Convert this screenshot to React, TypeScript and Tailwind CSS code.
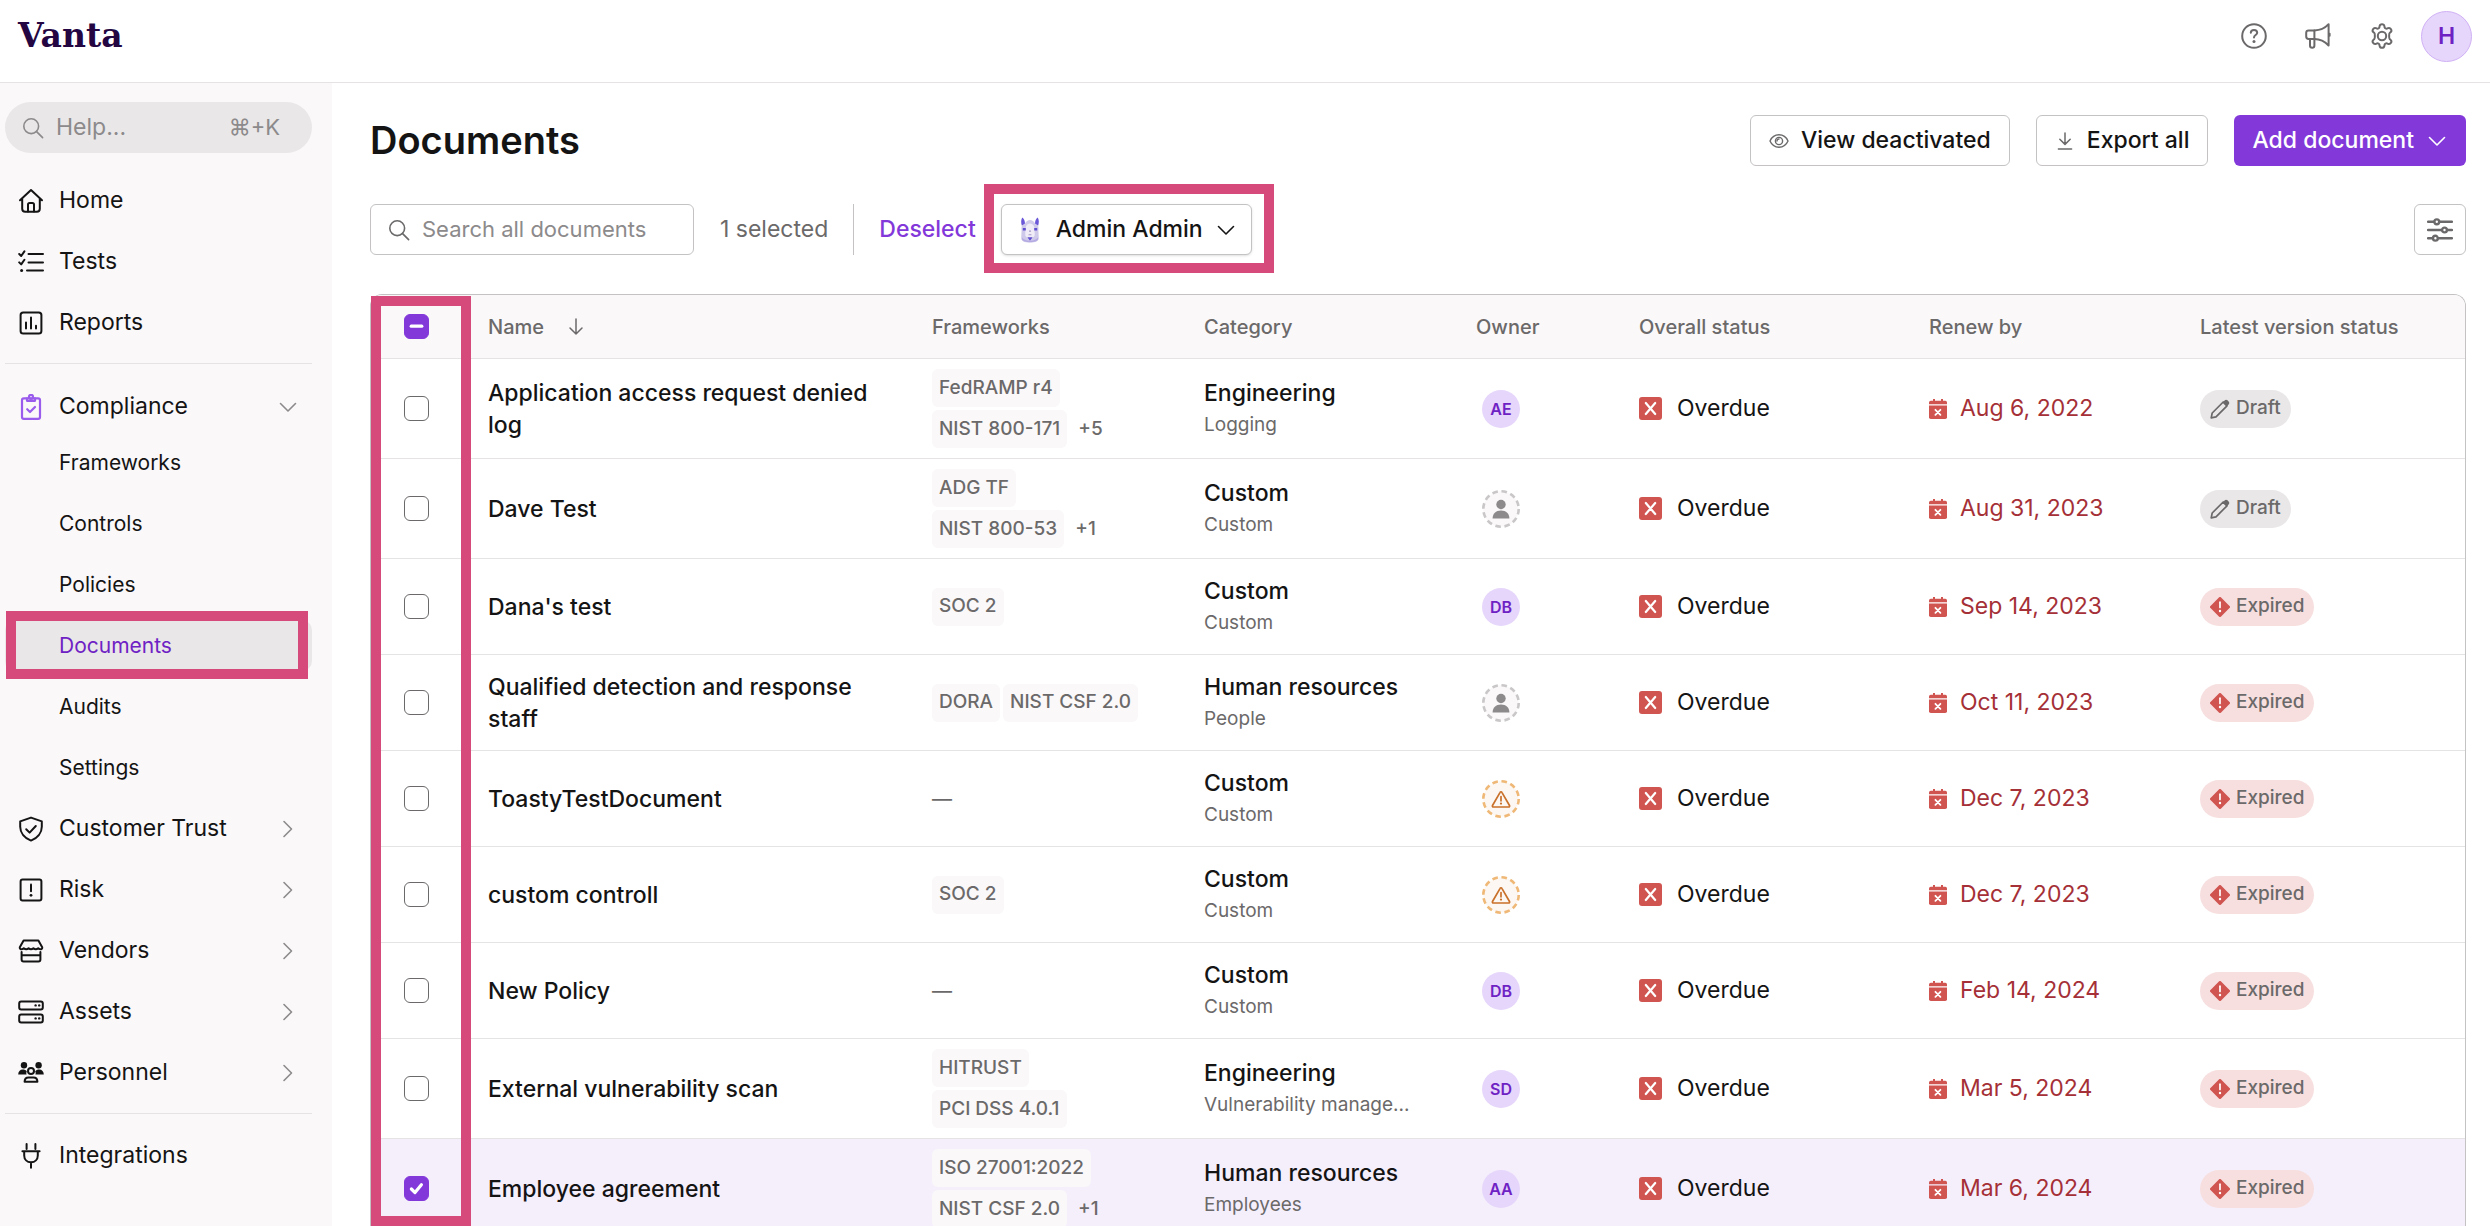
import React from "react";

type SvgProps = { className?: string; children?: React.ReactNode; box?: string; width?: number };

function Svg({ className = "size-[26px]", children, box = "0 0 26 26", width = 2 }: SvgProps) {
  return (
    <svg
      viewBox={box}
      className={`shrink-0 ${className}`}
      fill="none"
      stroke="currentColor"
      strokeWidth={width}
      strokeLinecap="round"
      strokeLinejoin="round"
      aria-hidden="true"
    >
      {children}
    </svg>
  );
}

const HomeIcon = () => (
  <Svg>
    <path d="M2 12.2 13 2l11 10.2M4.2 10.4v10.4a3 3 0 0 0 3 3h11.6a3 3 0 0 0 3-3V10.4" />
    <path d="M10 23.5v-7a1.6 1.6 0 0 1 1.6-1.6h2.8a1.6 1.6 0 0 1 1.6 1.6v7" />
  </Svg>
);

const TestsIcon = () => (
  <Svg>
    <path d="m1.2 5 2 2 3.2-4.6M1.2 13.4l2 2 3.2-4.6M10.5 5H25M10.5 13.4H25M9 21.6h16" />
    <circle cx="3.6" cy="21.6" r="1.5" fill="currentColor" stroke="none" />
  </Svg>
);

const ReportsIcon = () => (
  <Svg>
    <rect x="2.6" y="2.4" width="20.8" height="21.2" rx="2.6" />
    <path d="M8 12.5v6M13 7.5v11M18 15.8v2.7" />
  </Svg>
);

const ComplianceIcon = () => (
  <Svg width={2.2}>
    <rect x="4" y="4.4" width="18" height="20.4" rx="1.8" />
    <path d="M9 4.4v2.4h8V4.4" />
    <circle cx="13" cy="2.8" r="2" />
    <path d="m9.2 15.2 2.8 2.8 5-5" />
  </Svg>
);

const ShieldIcon = () => (
  <Svg>
    <path d="M13 1.6 2.2 5.4v5.4c0 6.2 4.4 11.4 10.8 13.8 6.4-2.4 10.8-7.6 10.8-13.8V5.4Z" />
    <path d="m8.2 13.2 3.4 3.4 6.2-6.6" />
  </Svg>
);

const RiskIcon = () => (
  <Svg>
    <rect x="2.6" y="2.4" width="20.8" height="21.2" rx="2" />
    <path d="M13 7.5v6.7" />
    <circle cx="13" cy="18.3" r="1.4" fill="currentColor" stroke="none" />
  </Svg>
);

const VendorsIcon = () => (
  <Svg>
    <path d="M5.6 2.4h14.8l3.8 6.8c.6 2-2.4 3-4 1-1.6 1.4-3.2 1.4-4.8 0-1.6 1.4-3.2 1.4-4.8 0-1.6 1.4-3.2 1.4-4.8 0-1.6 2-4.6 1-4-1ZM3.6 14v7.6a2 2 0 0 0 2 2h14.8a2 2 0 0 0 2-2V14M3.6 17.2h18.8" />
  </Svg>
);

const AssetsIcon = () => (
  <Svg>
    <rect x="1.2" y="2.4" width="23.6" height="8" rx="2" />
    <rect x="1.2" y="15.4" width="23.6" height="8" rx="2" />
    <g fill="currentColor" stroke="none">
      <circle cx="17.6" cy="6.4" r="1.2" />
      <circle cx="21.2" cy="6.4" r="1.2" />
      <circle cx="17.6" cy="19.4" r="1.2" />
      <circle cx="21.2" cy="19.4" r="1.2" />
    </g>
  </Svg>
);

const PersonnelIcon = () => (
  <Svg>
    <g fill="currentColor" stroke="none">
      <circle cx="6" cy="5.2" r="3.2" />
      <circle cx="20.6" cy="5.2" r="3.2" />
      <path d="M.2 14.6c0-3 1.8-5 4.6-5 1.6 0 3.2.6 4 1.8-.6 1-.6 2.2-.2 3.2ZM25.8 14.6c0-3-1.8-5-4.6-5-1.6 0-3.2.6-4 1.8.6 1 .6 2.2.2 3.2Z" />
    </g>
    <circle cx="13" cy="11" r="3" />
    <path d="M6.6 21.8c0-3 1.8-4.4 4-4.4h4.8c2.2 0 4 1.4 4 4.4Z" />
  </Svg>
);

const PlugIcon = () => (
  <Svg>
    <path d="M8.6 1v5M17.4 1v5M4.4 8.2h17.2M6.2 8.2v4.2c0 4 2.8 6.8 6.8 6.8s6.8-2.8 6.8-6.8V8.2M13 19.4v5.4" />
  </Svg>
);

const SearchIcon = ({ className = "size-[22px]" }: { className?: string }) => (
  <Svg className={className} box="0 0 22 22" width={1.6}>
    <circle cx="9.2" cy="9.2" r="7.4" />
    <path d="m14.6 14.6 6 6" />
  </Svg>
);

const ChevronDown = ({ className = "size-[22px]" }: { className?: string }) => (
  <Svg className={className} box="0 0 22 22" width={1.6}>
    <path d="m3.5 7.5 7.5 7.5 7.5-7.5" />
  </Svg>
);

const ChevronRight = ({ className = "size-[22px]" }: { className?: string }) => (
  <Svg className={className} box="0 0 22 22" width={1.6}>
    <path d="m7 3.5 7.5 7.5L7 18.5" />
  </Svg>
);

const HelpIcon = () => (
  <Svg>
    <circle cx="13" cy="13" r="11.8" />
    <path d="M9.8 9.8c0-1.8 1.4-2.8 3.2-2.8s3.2 1.2 3.2 2.8c0 2.2-3.2 2.2-3.2 4.6" />
    <circle cx="13" cy="18.4" r="1.5" fill="currentColor" stroke="none" />
  </Svg>
);

const MegaphoneIcon = () => (
  <Svg>
    <path d="M9.4 7.4H3.6a2.4 2.4 0 0 0-2.4 2.4v3.8A2.4 2.4 0 0 0 3.6 16h5.8Z" />
    <path d="M9.4 7.4c5.6 0 10.4-2 14.2-6.2v21.4c-3.8-4.2-8.6-6.6-14.2-6.6" />
    <path d="M5 16v6.6a2.2 2.2 0 0 0 4.4 0V16" />
    <path d="M24.6 10.8v2" />
  </Svg>
);

const GearIcon = () => (
  <Svg>
    <path d="M10.6 3.2c.2-1.2 1-2 2.4-2s2.2.8 2.4 2l.2 1.2c.1.7 1.6 1.5 2.3 1.2l1.1-.5c1.2-.4 2.3-.1 3 1.1.7 1.2.5 2.3-.5 3.1l-.9.8c-.6.5-.6 5.3 0 5.8l.9.8c1 .8 1.2 1.9.5 3.1-.7 1.2-1.8 1.5-3 1.1l-1.1-.5c-.7-.3-2.2.5-2.3 1.2l-.2 1.2c-.2 1.2-1 2-2.4 2s-2.2-.8-2.4-2l-.2-1.2c-.1-.7-1.6-1.5-2.3-1.2l-1.1.5c-1.2.4-2.3.1-3-1.1-.7-1.2-.5-2.3.5-3.1l.9-.8c.6-.5.6-5.3 0-5.8l-.9-.8c-1-.8-1.2-1.9-.5-3.1.7-1.2 1.8-1.5 3-1.1l1.1.5c.7.3 2.2-.5 2.3-1.2Z" />
    <circle cx="13" cy="13" r="4.2" />
  </Svg>
);

const EyeIcon = () => (
  <Svg className="size-5" box="0 0 20 20" width={1.4}>
    <path d="M1 10c1.8-4 5-6.200 9-6.200S17.200 6 19 10c-1.800 4-5 6.200-9 6.200S2.800 14 1 10Z" />
    <circle cx="10" cy="10" r="3.6" />
    <path d="M8 10a2 2 0 0 1 2-2" />
  </Svg>
);

const DownloadIcon = () => (
  <Svg className="size-5" box="0 0 20 20" width={1.5}>
    <path d="M10 2v11M4.8 8.2 10 13.4l5.2-5.2M3.4 18h13.2" />
  </Svg>
);

const SlidersIcon = () => (
  <Svg width={2.4}>
    <path d="M1 4.8h6M12.6 4.8H25M1 13h13.6M20.4 13H25M1 21.2h4.6M11.2 21.2H25" />
    <circle cx="9.8" cy="4.8" r="2.4" />
    <circle cx="17.5" cy="13" r="2.4" />
    <circle cx="8.4" cy="21.2" r="2.4" />
  </Svg>
);

const SortArrow = () => (
  <Svg className="size-5" box="0 0 20 20" width={1.5}>
    <path d="M10 2v15M4 11l6 6 6-6" />
  </Svg>
);

const OverdueIcon = () => (
  <svg viewBox="0 0 23 23" className="size-[23px] shrink-0" aria-hidden="true">
    <rect width="23" height="23" rx="3" fill="#d05551" />
    <path d="m6.8 6 9.4 11M16.2 6 6.8 17" stroke="#fff" strokeWidth="2.2" strokeLinecap="round" />
  </svg>
);

const CalendarIcon = () => (
  <svg viewBox="0 0 18 20" className="h-5 w-[18px] shrink-0" aria-hidden="true">
    <path d="M4 0h2v1.8h6V0h2v1.8h2A1.8 1.8 0 0 1 18 3.6v1.6H0V3.6a1.8 1.8 0 0 1 1.8-1.800H4Z" fill="#d05551" />
    <path d="M0 6.6h18v11.6A1.8 1.8 0 0 1 16.2 20H1.8A1.8 1.8 0 0 1 0 18.2Z" fill="#d05551" />
    <path d="m6.4 10.8 5 5M11.4 10.8l-5 5" stroke="#fff" strokeWidth="1.8" strokeLinecap="round" />
  </svg>
);

const PencilIcon = () => (
  <svg viewBox="0 0 20 20" className="size-5 shrink-0" aria-hidden="true">
    <path d="m1.2 18.8 1-4.8L13.2 3l3.8 3.8L6 17.8Z" fill="none" stroke="#6b6969" strokeWidth="1.7" strokeLinejoin="round" />
    <path d="m12.6 3.4 2-2c1-1 2.2-.8 3.2.2l.6.6c1 1 1.2 2.2.2 3.2l-2 2Z" fill="#6b6969" />
  </svg>
);

const ExpiredIcon = () => (
  <svg viewBox="0 0 20 20" className="size-5 shrink-0" aria-hidden="true">
    <path d="M8.9.5a1.5 1.5 0 0 1 2.2 0l8.4 8.4a1.5 1.5 0 0 1 0 2.2l-8.4 8.4a1.5 1.5 0 0 1-2.2 0L.5 11.1a1.5 1.5 0 0 1 0-2.2Z" fill="#d05551" />
    <path d="M10 5.2v5.2" stroke="#fff" strokeWidth="1.7" strokeLinecap="round" />
    <circle cx="10" cy="14" r="1.2" fill="#fff" />
  </svg>
);

const LlamaIcon = () => (
  <svg viewBox="0 0 20 26" className="mr-1 h-[26px] w-5 shrink-0" aria-hidden="true">
    <path d="M2.2.6C4 1.8 5 4 5 7L2 9C.8 6 .9 3 2.2.6ZM17.8.6C16 1.8 15 4 15 7l3 2c1.2-3 1.1-6-.2-8.4Z" fill="#6a58d8" />
    <path d="M5 6.6C6 4.2 8 3 10 3s4 1.2 5 3.6l3 1.8c.6 1.6.6 3 .4 4.6l.4 8c0 3-3 4.6-8.8 4.6S1.2 24 1.2 21l.4-8c-.2-1.6-.2-3 .4-4.6Z" fill="#cfc9ea" />
    <path d="M6 9.4C7 7.2 8.4 6.4 10 6.4s3 .8 4 3c.8 2.6.4 4.6.8 7.6.2 2.6-1.6 4-4.8 4S5 19.6 5.2 17c.4-3 0-5 .8-7.6Z" fill="#efecf8" />
    <path d="M2.8 11h3v2.6h-3ZM17.2 11h-3v2.6h3ZM7.4 20.2h5.2L10 23.8Z" fill="#5f4fd0" />
    <path d="M9 13.4h2v1.4H9ZM8.6 17.2h2.8v1H8.6Z" fill="#a79cc4" />
    <path d="M2 20.5v2c1 1.8 4 2.8 8 2.8s7-1 8-2.8v-2c-1.4 1.8-4 3.3-8 3.3s-6.6-1.5-8-3.3Z" fill="#b5abe2" />
  </svg>
);

type NavEntry = { label: string; icon: () => React.ReactElement; expandable?: boolean };

const topNav: NavEntry[] = [
  { label: "Home", icon: HomeIcon },
  { label: "Tests", icon: TestsIcon },
  { label: "Reports", icon: ReportsIcon },
];

const complianceNav = ["Frameworks", "Controls", "Policies", "Documents", "Audits", "Settings"];

const lowerNav: NavEntry[] = [
  { label: "Customer Trust", icon: ShieldIcon, expandable: true },
  { label: "Risk", icon: RiskIcon, expandable: true },
  { label: "Vendors", icon: VendorsIcon, expandable: true },
  { label: "Assets", icon: AssetsIcon, expandable: true },
  { label: "Personnel", icon: PersonnelIcon, expandable: true },
];

const navRow = "flex h-[51px] w-full items-center gap-[15px] px-[13px] text-[23px]";

function NavItem({ label, icon: Icon, expandable }: NavEntry) {
  const content = (
    <>
      <Icon />
      <span className="flex-1 text-left">{label}</span>
      {expandable && <ChevronRight className="size-[22px] text-[#8c8a8b]" />}
    </>
  );
  return (
    <li>
      {expandable ? (
        <button type="button" className={navRow}>{content}</button>
      ) : (
        <a href="#" className={navRow}>{content}</a>
      )}
    </li>
  );
}

function Sidebar() {
  return (
    <aside className="w-[332px] shrink-0 bg-[#faf8f9] pt-[19px] pr-5 pl-[5px]">
      <label className="flex h-[51px] items-center gap-3 rounded-full bg-[#e9e7e8] pr-8 pl-[17px] text-[#8c8a8b]">
        <SearchIcon />
        <input
          type="text"
          aria-label="Help"
          placeholder="Help..."
          className="min-w-0 flex-1 bg-transparent text-[23px] outline-none placeholder:text-[#8c8a8b]"
        />
        <span className="text-[22px]">⌘+K</span>
      </label>
      <nav>
        <ul className="mt-[22px] flex flex-col gap-2.5">
          {topNav.map((entry) => (
            <NavItem key={entry.label} {...entry} />
          ))}
        </ul>
        <hr className="mt-[15px] border-[#e5e3e4]" />
        <button type="button" className={`mt-[17px] ${navRow}`}>
          <span className="text-[#9a5cec]">
            <ComplianceIcon />
          </span>
          <span className="flex-1 text-left">Compliance</span>
          <ChevronDown className="size-[22px] text-[#8c8a8b]" />
        </button>
        <ul className="mt-[5px] flex flex-col gap-2.5">
          {complianceNav.map((label) => (
            <li key={label} className="relative">
              <a
                href="#"
                aria-current={label === "Documents" ? "page" : undefined}
                className="flex h-[51px] items-center rounded-[10px] pl-[54px] text-[21px] aria-[current=page]:bg-[#e9e7e8] aria-[current=page]:text-[#6f22c4]"
              >
                {label}
              </a>
              {label === "Documents" && (
                <span className="pointer-events-none absolute -top-[9px] right-1 -bottom-2 left-px border-10 border-[#d54a7a]" />
              )}
            </li>
          ))}
        </ul>
        <ul className="mt-2.5 flex flex-col gap-2.5">
          {lowerNav.map((entry) => (
            <NavItem key={entry.label} {...entry} />
          ))}
        </ul>
        <hr className="mt-[15px] border-[#e5e3e4]" />
        <ul className="mt-4">
          <NavItem label="Integrations" icon={PlugIcon} />
        </ul>
      </nav>
    </aside>
  );
}

type Row = {
  name: string;
  frameworks: string[];
  more?: string;
  category: string;
  sub: string;
  owner: string;
  date: string;
  status: "Draft" | "Expired";
  checked?: boolean;
};

const rows: Row[] = [
  { name: "Application access request denied log", frameworks: ["FedRAMP r4", "NIST 800-171"], more: "+5", category: "Engineering", sub: "Logging", owner: "AE", date: "Aug 6, 2022", status: "Draft" },
  { name: "Dave Test", frameworks: ["ADG TF", "NIST 800-53"], more: "+1", category: "Custom", sub: "Custom", owner: "none", date: "Aug 31, 2023", status: "Draft" },
  { name: "Dana's test", frameworks: ["SOC 2"], category: "Custom", sub: "Custom", owner: "DB", date: "Sep 14, 2023", status: "Expired" },
  { name: "Qualified detection and response staff", frameworks: ["DORA", "NIST CSF 2.0"], category: "Human resources", sub: "People", owner: "none", date: "Oct 11, 2023", status: "Expired" },
  { name: "ToastyTestDocument", frameworks: [], category: "Custom", sub: "Custom", owner: "warning", date: "Dec 7, 2023", status: "Expired" },
  { name: "custom controll", frameworks: ["SOC 2"], category: "Custom", sub: "Custom", owner: "warning", date: "Dec 7, 2023", status: "Expired" },
  { name: "New Policy", frameworks: [], category: "Custom", sub: "Custom", owner: "DB", date: "Feb 14, 2024", status: "Expired" },
  { name: "External vulnerability scan", frameworks: ["HITRUST", "PCI DSS 4.0.1"], category: "Engineering", sub: "Vulnerability manage...", owner: "SD", date: "Mar 5, 2024", status: "Expired" },
  { name: "Employee agreement", frameworks: ["ISO 27001:2022", "NIST CSF 2.0"], more: "+1", category: "Human resources", sub: "Employees", owner: "AA", date: "Mar 6, 2024", status: "Expired", checked: true },
];

function Owner({ owner }: { owner: string }) {
  if (owner === "none") {
    return (
      <svg viewBox="0 0 38 38" className="size-[38px]" role="img" aria-label="No owner">
        <circle cx="19" cy="19" r="17.7" fill="#faf8f9" stroke="#c9c7c8" strokeWidth="2.6" strokeDasharray="5.56 3.7" />
        <circle cx="19" cy="14.5" r="4.7" fill="#8c8a8b" />
        <path d="M10.6 28.4c0-5 3.2-8 8.4-8s8.4 3 8.4 8Z" fill="#8c8a8b" />
      </svg>
    );
  }
  if (owner === "warning") {
    return (
      <svg viewBox="0 0 38 38" className="size-[38px]" role="img" aria-label="Owner needs attention">
        <circle cx="19" cy="19" r="17.7" fill="#fcf7f2" stroke="#efb877" strokeWidth="2.6" strokeDasharray="5.56 3.7" />
        <path d="M18.1 12.3a1 1 0 0 1 1.8 0l7.6 13.2a1 1 0 0 1-.9 1.5H11.4a1 1 0 0 1-.9-1.5Z" fill="none" stroke="#c9702a" strokeWidth="1.7" strokeLinejoin="round" />
        <path d="M19 16.6v4.2" stroke="#c9702a" strokeWidth="1.7" strokeLinecap="round" />
        <circle cx="19" cy="23.6" r="1.1" fill="#c9702a" />
      </svg>
    );
  }
  return (
    <span className="flex size-[38px] items-center justify-center rounded-full bg-[#e6d6fb] text-base font-semibold text-[#6f22c4]">
      {owner}
    </span>
  );
}

function RowCheckbox({ label, checked, partial }: { label: string; checked?: boolean; partial?: boolean }) {
  return (
    <label className="relative mx-auto flex size-[25px]">
      <input
        type="checkbox"
        aria-label={label}
        defaultChecked={checked || partial}
        className="peer size-full appearance-none rounded-md border border-[#6b6969] bg-white checked:border-[#8338da] checked:bg-[#8338da]"
      />
      <svg
        viewBox="0 0 25 25"
        className="pointer-events-none absolute inset-0 hidden peer-checked:block"
        fill="none"
        stroke="#fff"
        strokeWidth="3.2"
        strokeLinecap="round"
        strokeLinejoin="round"
        aria-hidden="true"
      >
        {partial ? <path d="M7.2 12.2h10.6" /> : <path d="m7.4 13 3.6 3.6 6.4-7.8" />}
      </svg>
    </label>
  );
}

const cell = "border-b border-[#e5e3e4]";
const th = `h-16 px-4 text-left text-[20px] font-medium text-[#6b6969] ${cell}`;
const td = `h-24 px-4 ${cell}`;
const tdNarrow = `h-24 pr-11 pl-4 ${cell}`;

function DocumentsTable() {
  return (
    <table className="w-full table-fixed border-separate border-spacing-0">
      <colgroup>
        <col className="w-[101px]" />
        <col className="w-[444px]" />
        <col className="w-[272px]" />
        <col className="w-[272px]" />
        <col className="w-[163px]" />
        <col className="w-[290px]" />
        <col className="w-[271px]" />
        <col className="w-[281px]" />
      </colgroup>
      <thead className="bg-[#faf8f9]">
        <tr>
          <th scope="col" className={`h-16 pr-2.5 ${cell}`}>
            <RowCheckbox label="Select all documents" partial />
          </th>
          <th scope="col" className={th} aria-sort="descending">
            <button type="button" className="flex items-center gap-[22px]">
              Name <SortArrow />
            </button>
          </th>
          <th scope="col" className={th}>Frameworks</th>
          <th scope="col" className={th}>Category</th>
          <th scope="col" className={th}>Owner</th>
          <th scope="col" className={th}>Overall status</th>
          <th scope="col" className={th}>Renew by</th>
          <th scope="col" className={th}>Latest version status</th>
        </tr>
      </thead>
      <tbody>
        {rows.map((row) => (
          <tr key={row.name} className={row.checked ? "bg-[#f5effc]" : "bg-white"}>
            <td className={`h-24 pr-2.5 ${cell}`}>
              <RowCheckbox label={`Select ${row.name}`} checked={row.checked} />
            </td>
            <td className={td}>
              <div className="pr-8 text-[23px] leading-8 font-medium">{row.name}</div>
            </td>
            <td className={tdNarrow}>
              {row.frameworks.length === 0 ? (
                <span className="text-[20px] text-[#6b6969]">—</span>
              ) : (
                <div className="flex flex-wrap gap-[3px] py-2.5 text-[19px] font-medium text-[#6b6969]">
                  {row.frameworks.map((name) => (
                    <span key={name} className="flex h-[38px] items-center rounded-md bg-[#faf8f9] px-[7px]">
                      {name}
                    </span>
                  ))}
                  {row.more && <span className="flex items-center pl-2">{row.more}</span>}
                </div>
              )}
            </td>
            <td className={tdNarrow}>
              <div className="text-[23px] leading-8 font-medium whitespace-nowrap">{row.category}</div>
              <div className="text-[19px] leading-8 whitespace-nowrap text-[#6b6969]">{row.sub}</div>
            </td>
            <td className={`h-24 px-[22px] ${cell}`}>
              <Owner owner={row.owner} />
            </td>
            <td className={td}>
              <span className="flex items-center gap-[15px] text-[23px]">
                <OverdueIcon />
                Overdue
              </span>
            </td>
            <td className={td}>
              <span className="flex items-center gap-[13px] text-[23px] text-[#a53037]">
                <CalendarIcon />
                {row.date}
              </span>
            </td>
            <td className={td}>
              <span
                className={`inline-flex h-[38px] items-center gap-1.5 rounded-full px-2.5 align-middle text-[19px] font-medium text-[#6b6969] ${
                  row.status === "Draft" ? "bg-[#e9e7e8]" : "bg-[#f7dfdf]"
                }`}
              >
                {row.status === "Draft" ? <PencilIcon /> : <ExpiredIcon />}
                {row.status}
              </span>
            </td>
          </tr>
        ))}
      </tbody>
    </table>
  );
}

const outlineButton = "flex h-[51px] items-center gap-3 rounded-md border border-[#c4c2c3] bg-white text-[23px] font-medium";

export default function App() {
  return (
    <div className="flex h-screen flex-col overflow-hidden bg-white font-['Inter',sans-serif] text-[#151414]">
      <header className="flex h-[83px] shrink-0 items-center justify-between border-b border-[#e5e3e4] px-[18px] pb-2.5">
        <a href="#" className="font-['DejaVu_Serif',serif] text-[33px] font-bold text-[#240642]">Vanta</a>
        <div className="flex items-center gap-[38px] text-[#6b6969]">
          <button type="button" aria-label="Help"><HelpIcon /></button>
          <button type="button" aria-label="Announcements"><MegaphoneIcon /></button>
          <button type="button" aria-label="Settings"><GearIcon /></button>
          <button
            type="button"
            aria-label="Account"
            className="-ml-3 flex size-[51px] items-center justify-center rounded-full border border-[#d0b0f5] bg-[#e6d6fb] text-[23px] font-semibold text-[#6f22c4]"
          >
            H
          </button>
        </div>
      </header>
      <div className="flex min-h-0 flex-1">
        <Sidebar />
        <main className="flex min-w-0 flex-1 flex-col pt-8 pr-6 pl-[38px]">
          <div className="flex items-center justify-between">
            <h1 className="text-[38px] leading-[51px] font-semibold">Documents</h1>
            <div className="flex items-center gap-[26px]">
              <button type="button" className={`px-[18px] ${outlineButton}`}>
                <span className="text-[#6b6969]"><EyeIcon /></span>
                View deactivated
              </button>
              <button type="button" className={`px-[18px] ${outlineButton}`}>
                <span className="text-[#6b6969]"><DownloadIcon /></span>
                Export all
              </button>
              <button type="button" className="flex h-[51px] items-center gap-3 rounded-md bg-[#8338da] px-[18px] text-[23px] font-medium text-white">
                Add document
                <ChevronDown />
              </button>
            </div>
          </div>
          <div className="mt-[38px] flex items-center">
            <label className="flex h-[51px] w-[324px] items-center gap-3 rounded-md border border-[#c4c2c3] px-[17px] text-[#6b6969]">
              <SearchIcon />
              <input
                type="text"
                aria-label="Search all documents"
                placeholder="Search all documents"
                className="min-w-0 flex-1 text-[22px] outline-none placeholder:text-[#8c8a8b]"
              />
            </label>
            <span className="ml-[26px] border-r border-[#c4c2c3] py-[9px] pr-[25px] text-[23px] leading-[33px] text-[#6b6969]">1 selected</span>
            <button type="button" className="ml-[25px] text-[23px] font-medium text-[#8338da]">Deselect</button>
            <div className="relative ml-[25px]">
              <button type="button" aria-haspopup="listbox" className={`pr-3.5 pl-[18px] shadow-sm ${outlineButton}`}>
                <LlamaIcon />
                Admin Admin
                <ChevronDown />
              </button>
              <span className="pointer-events-none absolute -top-5 -right-[22px] -bottom-[18px] -left-[17px] border-10 border-[#d54a7a]" />
            </div>
            <button type="button" aria-label="Table settings" className="ml-auto flex h-[51px] w-[52px] items-center justify-center rounded-md border border-[#c4c2c3] text-[#6b6969]">
              <SlidersIcon />
            </button>
          </div>
          <div className="relative mt-[39px] min-h-0 flex-1">
            <div className="h-full overflow-hidden rounded-t-xl border border-b-0 border-[#c4c2c3]">
              <DocumentsTable />
            </div>
            <span className="pointer-events-none absolute top-0.5 bottom-0 left-px w-[100px] border-10 border-[#d54a7a]" />
          </div>
        </main>
      </div>
    </div>
  );
}
